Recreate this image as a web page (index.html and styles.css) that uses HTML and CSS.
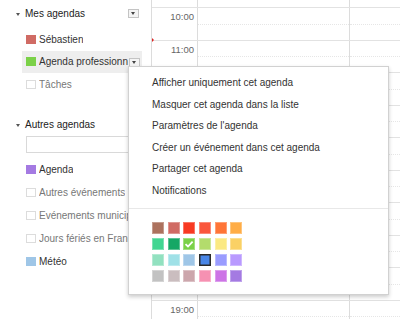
FILE: index.html
```html
<!DOCTYPE html>
<html lang="fr">
<head>
    <meta charset="UTF-8">
    <meta name="viewport" content="width=device-width, initial-scale=1.0">
    <link rel="stylesheet" href="styles.css">
</head>
<body>
    <div class="app">
        <div class="sidebar">
            <div class="section-head">
                <span class="twisty"></span>
                <span class="section-title">Mes agendas</span>
                <span class="drop-btn"></span>
            </div>
            <div class="cal-row">
                <span class="swatch" style="background:#d06b64"></span>
                <span class="cal-name">Sébastien</span>
            </div>
            <div class="cal-row active">
                <span class="swatch" style="background:#7bd148"></span>
                <span class="cal-name">Agenda professionnel</span>
                <span class="drop-btn"></span>
            </div>
            <div class="cal-row">
                <span class="swatch empty"></span>
                <span class="cal-name muted">Tâches</span>
            </div>

            <div class="section-head second">
                <span class="twisty"></span>
                <span class="section-title">Autres agendas</span>
            </div>
            <div class="add-box"></div>
            <div class="cal-row tall">
                <span class="swatch" style="background:#a47ae2"></span>
                <span class="cal-name">Agenda</span>
            </div>
            <div class="cal-row tall">
                <span class="swatch empty"></span>
                <span class="cal-name muted">Autres événements</span>
            </div>
            <div class="cal-row tall">
                <span class="swatch empty"></span>
                <span class="cal-name muted">Evénements municipaux</span>
            </div>
            <div class="cal-row tall">
                <span class="swatch empty"></span>
                <span class="cal-name muted">Jours fériés en France</span>
            </div>
            <div class="cal-row tall">
                <span class="swatch" style="background:#9fc6e7"></span>
                <span class="cal-name">Météo</span>
            </div>
        </div>

        <div class="calendar">
            <div class="hours">
                <div class="hour"><div class="time"></div><div class="day"></div><div class="day last"></div></div>
                <div class="hour"><div class="time">10:00</div><div class="day"></div><div class="day last"></div></div>
                <div class="hour"><div class="time">11:00</div><div class="day"></div><div class="day last"></div><span class="now"></span></div>
                <div class="hour"><div class="time">12:00</div><div class="day"></div><div class="day last"></div></div>
                <div class="hour"><div class="time">13:00</div><div class="day"></div><div class="day last"></div></div>
                <div class="hour"><div class="time">14:00</div><div class="day"></div><div class="day last"></div></div>
                <div class="hour"><div class="time">15:00</div><div class="day"></div><div class="day last"></div></div>
                <div class="hour"><div class="time">16:00</div><div class="day"></div><div class="day last"></div></div>
                <div class="hour"><div class="time">17:00</div><div class="day"></div><div class="day last"></div></div>
                <div class="hour"><div class="time">18:00</div><div class="day"></div><div class="day last"></div></div>
                <div class="hour"><div class="time">19:00</div><div class="day"></div><div class="day last"></div></div>
            </div>
        </div>

        <div class="menu">
            <div class="menu-item">Afficher uniquement cet agenda</div>
            <div class="menu-item">Masquer cet agenda dans la liste</div>
            <div class="menu-item">Paramètres de l'agenda</div>
            <div class="menu-item">Créer un événement dans cet agenda</div>
            <div class="menu-item">Partager cet agenda</div>
            <div class="menu-item">Notifications</div>
            <div class="menu-sep"></div>
            <div class="palette">
                <span class="chip" style="background:#ac725e"></span>
                <span class="chip" style="background:#d06b64"></span>
                <span class="chip" style="background:#f83a22"></span>
                <span class="chip" style="background:#fa573c"></span>
                <span class="chip" style="background:#ff7537"></span>
                <span class="chip" style="background:#ffad46"></span>

                <span class="chip" style="background:#42d692"></span>
                <span class="chip" style="background:#16a765"></span>
                <span class="chip checked" style="background:#7bd148">
                    <svg width="10" height="8" viewBox="0 0 10 8"><path d="M1.5 4.2 L4 6.5 L8.6 1.6" fill="none" stroke="#fff" stroke-width="1.8"/></svg>
                </span>
                <span class="chip" style="background:#b3dc6c"></span>
                <span class="chip" style="background:#fbe983"></span>
                <span class="chip" style="background:#fad165"></span>

                <span class="chip" style="background:#92e1c0"></span>
                <span class="chip" style="background:#9fe1e7"></span>
                <span class="chip" style="background:#9fc6e7"></span>
                <span class="chip selected" style="background:#4986e7"></span>
                <span class="chip" style="background:#9a9cff"></span>
                <span class="chip" style="background:#b99aff"></span>

                <span class="chip" style="background:#c2c2c2"></span>
                <span class="chip" style="background:#cabdbf"></span>
                <span class="chip" style="background:#cca6ac"></span>
                <span class="chip" style="background:#f691b2"></span>
                <span class="chip" style="background:#cd74e6"></span>
                <span class="chip" style="background:#a47ae2"></span>
            </div>
        </div>
    </div>
</body>
</html>
```

FILE: styles.css
```css
body {
    margin: 0;
    background-color: #fff;
    font-family: "Liberation Sans", Arial, sans-serif;
    font-size: 10px;
    color: #222;
}

.app {
    position: relative;
    display: flex;
    width: 400px;
    height: 319px;
    overflow: hidden;
}

/* colonne de gauche */
.sidebar {
    width: 151px;
    flex-shrink: 0;
}

.section-head {
    position: relative;
    display: flex;
    align-items: center;
    height: 12px;
    padding: 8px 0;
    line-height: 12px;
}

.section-head.second {
    margin-top: 15.5px;
    padding-bottom: 5px;
}

.twisty {
    width: 0;
    height: 0;
    margin: 1px 5px 0 16px;
    border-left: 2.5px solid transparent;
    border-right: 2.5px solid transparent;
    border-top: 3px solid #555;
}

.section-title {
    color: #222;
}

.drop-btn {
    position: absolute;
    left: 128px;
    top: 9px;
    width: 9px;
    height: 7px;
    border: 1px solid #c4c4c4;
    background-color: #f4f4f4;
}

.drop-btn::after {
    content: "";
    position: absolute;
    left: 2px;
    top: 2px;
    border-left: 2.5px solid transparent;
    border-right: 2.5px solid transparent;
    border-top: 3px solid #444;
}

.cal-row {
    position: relative;
    display: flex;
    align-items: center;
    height: 22.5px;
    margin-left: 22px;
    width: 120px;
    padding-left: 4px;
    box-sizing: border-box;
}

.cal-row.tall {
    height: 23px;
}

.cal-row.active {
    background-color: #eeeeee;
}

.cal-row.active .drop-btn {
    left: 107px;
    top: 7px;
}

.swatch {
    width: 10px;
    height: 9px;
    flex-shrink: 0;
    margin-right: 3px;
    box-sizing: border-box;
}

.swatch.empty {
    border: 1px solid #dcdcdc;
    background-color: #fff;
}

.cal-name {
    white-space: nowrap;
    overflow: hidden;
    color: #333;
    max-width: 89px;
}

.cal-row.tall .cal-name {
    max-width: none;
}

.cal-name.muted {
    color: #777;
}

.add-box {
    width: 120px;
    height: 17px;
    margin-left: 26px;
    margin-bottom: 5px;
    border: 1px solid #d9d9d9;
    box-sizing: border-box;
}

/* grille horaire */
.calendar {
    flex: 1;
    border-left: 1px solid #dcdcdc;
}

.hours {
    margin-top: -25.5px;
}

.hour {
    position: relative;
    display: grid;
    grid-template-columns: 46px 152px 1fr;
    height: 32.5px;
    border-top: 1px solid #e2e2e2;
    box-sizing: border-box;
}

.time {
    padding: 3px 3px 0 0;
    text-align: right;
    font-size: 9.5px;
    color: #666;
    border-right: 1px solid #dcdcdc;
}

.day {
    position: relative;
    border-right: 1px solid #dcdcdc;
}

.day.last {
    border-right: none;
}

.day::after {
    content: "";
    position: absolute;
    left: 0;
    right: 0;
    top: 15.5px;
    border-top: 1px dotted #e6e6e6;
}

.now {
    position: absolute;
    left: 0;
    top: -3px;
    border-top: 2px solid transparent;
    border-bottom: 2px solid transparent;
    border-left: 2px solid #dd2222;
}

/* menu contextuel */
.menu {
    position: absolute;
    left: 128px;
    top: 66px;
    width: 261px;
    padding: 5px 0 12px;
    background-color: #fff;
    border: 1px solid rgba(0, 0, 0, 0.18);
    box-shadow: 0 2px 4px rgba(0, 0, 0, 0.2);
    box-sizing: border-box;
}

.menu-item {
    height: 21.6px;
    line-height: 21.6px;
    padding-left: 23px;
    color: #333;
    white-space: nowrap;
}

.menu-sep {
    margin-top: 6px;
    border-top: 1px solid #e8e8e8;
}

.palette {
    display: grid;
    grid-template-columns: repeat(6, 12px);
    grid-auto-rows: 12px;
    column-gap: 3.67px;
    row-gap: 4px;
    padding: 13px 0 0 23px;
}

.chip {
    display: flex;
    align-items: center;
    justify-content: center;
    box-shadow: inset 0 0 0 1px rgba(255, 255, 255, 0.3);
}

.chip.selected {
    box-shadow: inset 0 0 0 1.5px #2a2a2a;
}
```
